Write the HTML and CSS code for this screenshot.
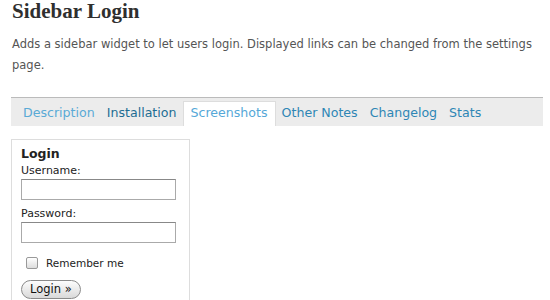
FILE: index.html
```html
<!DOCTYPE html>
<html lang="en">
<head>
  <meta charset="UTF-8" />
  <title>Sidebar Login</title>
  <link rel="stylesheet" href="styles.css">
</head>
<body>

<div class="plugin">
  <h1>Sidebar Login</h1>
  <p class="summary">Adds a sidebar widget to let users login. Displayed links can be changed from the settings page.</p>

  <ul class="tabs">
    <li><a href="#">Description</a></li>
    <li><a href="#" class="dark">Installation</a></li>
    <li class="active"><a href="#">Screenshots</a></li>
    <li><a href="#">Other Notes</a></li>
    <li><a href="#">Changelog</a></li>
    <li><a href="#">Stats</a></li>
  </ul>

  <div class="shot">
    <h3>Login</h3>
    <label for="user">Username:</label>
    <input type="text" id="user">
    <label for="pass">Password:</label>
    <input type="password" id="pass">
    <div class="remember">
      <span class="check"></span>
      <span>Remember me</span>
    </div>
    <button class="login-btn">Login &raquo;</button>
  </div>
</div>

</body>
</html>
```

FILE: styles.css
```css
body {
  margin: 0;
  background: #fff;
  font-family: 'DejaVu Sans', sans-serif;
  color: #555;
}

.plugin {
  margin-left: 11px;
  width: 532px;
}

h1 {
  font-family: 'Liberation Serif', serif;
  font-size: 21px;
  font-weight: bold;
  color: #2f2f2f;
  margin: 0;
  padding: 0 0 0 1px;
  line-height: 23px;
}

.summary {
  margin: 11px 0 0 1px;
  font-size: 11.5px;
  line-height: 21px;
  color: #555;
}

.tabs {
  list-style: none;
  margin: 21px 0 0 0;
  padding: 0 0 0 6px;
  border-top: 1px solid #bbb;
  background: #ececec;
  height: 28px;
  display: flex;
  align-items: flex-end;
}

.tabs li {
  padding: 0 6px;
  height: 24px;
  line-height: 21px;
  font-size: 12.6px;
}

.tabs a {
  text-decoration: none;
  color: #2e86b5;
}

.tabs li:first-child a {
  color: #5aaad6;
}

.tabs a.dark {
  color: #1e6d93;
}

.tabs li.active {
  background: #fff;
  border: 1px solid #ddd;
  border-bottom: none;
  padding: 0 7px;
}

.tabs li.active a {
  color: #55a8d8;
}

.shot {
  margin-top: 13px;
  width: 158px;
  border: 1px solid #ddd;
  border-bottom: none;
  padding: 6px 10px 0 9px;
  height: 161px;
  font-size: 11px;
  color: #222;
}

.shot h3 {
  margin: 0;
  font-size: 12.5px;
  font-weight: bold;
  line-height: 15px;
}

.shot label {
  display: block;
  margin-top: 3px;
  line-height: 14px;
}

.shot input {
  display: block;
  box-sizing: border-box;
  width: 155px;
  height: 21px;
  margin: 1px 0 7px;
  border: 1px solid #aaa;
  border-top-color: #888;
  background: #fff;
}

.remember {
  display: flex;
  align-items: center;
  gap: 8px;
  margin: 13px 0 0 5px;
  line-height: 14px;
  font-size: 10.5px;
}

.check {
  width: 10px;
  height: 10px;
  border: 1px solid #999;
  border-radius: 2px;
  background: linear-gradient(#fff, #ddd);
}

.login-btn {
  margin-top: 10px;
  height: 19px;
  padding: 0 8px;
  border: 1px solid #8a8a8a;
  border-radius: 10px;
  background: linear-gradient(#fdfdfd, #d9d9d9);
  font-family: 'DejaVu Sans', sans-serif;
  font-size: 11.5px;
  color: #111;
  line-height: 17px;
}
```
